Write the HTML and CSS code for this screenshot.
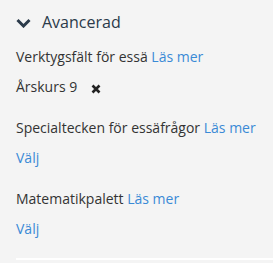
FILE: index.html
```html
<!DOCTYPE html>
<html lang="sv">
<head>
<meta charset="utf-8">
<link rel="stylesheet" href="styles.css">
</head>
<body>
<div class="panel">
  <div class="header">
    <svg class="chev" width="15" height="10" viewBox="0 0 15 10"><path d="M1.5 2 L7.5 8 L13.5 2" fill="none" stroke="#2b3a4a" stroke-width="3"/></svg>
    <span class="title">Avancerad</span>
  </div>
  <div class="group first">
    <div class="label">Verktygsfält för essä <a class="link">Läs mer</a></div>
    <div class="value">Årskurs 9<svg class="x" width="10" height="10" viewBox="0 0 10 10"><path d="M1.5 1.5 L8.5 8.5 M8.5 1.5 L1.5 8.5" stroke="#222" stroke-width="2.6"/></svg></div>
  </div>
  <div class="group">
    <div class="label">Specialtecken för essäfrågor <a class="link">Läs mer</a></div>
    <div class="value"><a class="link">Välj</a></div>
  </div>
  <div class="group">
    <div class="label">Matematikpalett <a class="link">Läs mer</a></div>
    <div class="value"><a class="link">Välj</a></div>
  </div>
  <div class="rule"></div>
</div>
</body>
</html>
```
FILE: styles.css
```css
html, body { margin: 0; padding: 0; background: #f4f4f4; }
body { font-family: "Open Sans", sans-serif; color: #333; font-size: 14px; }
.panel { padding: 10px 0 0 16px; width: 257px; }
.header { display: flex; align-items: center; height: 24px; }
.chev { margin-right: 11px; margin-top: 1px; }
.title { font-size: 16px; color: #2b3a4a; }
.group { margin-top: 11px; }
.group.first { margin-top: 8px; }
.label { line-height: 30px; }
.value { line-height: 30px; display: flex; align-items: center; }
.x { margin-left: 14px; margin-top: 4px; }
.link { color: #3a8ad6; text-decoration: none; }
.rule { height: 2px; background: #fff; margin-top: 14px; }
```
